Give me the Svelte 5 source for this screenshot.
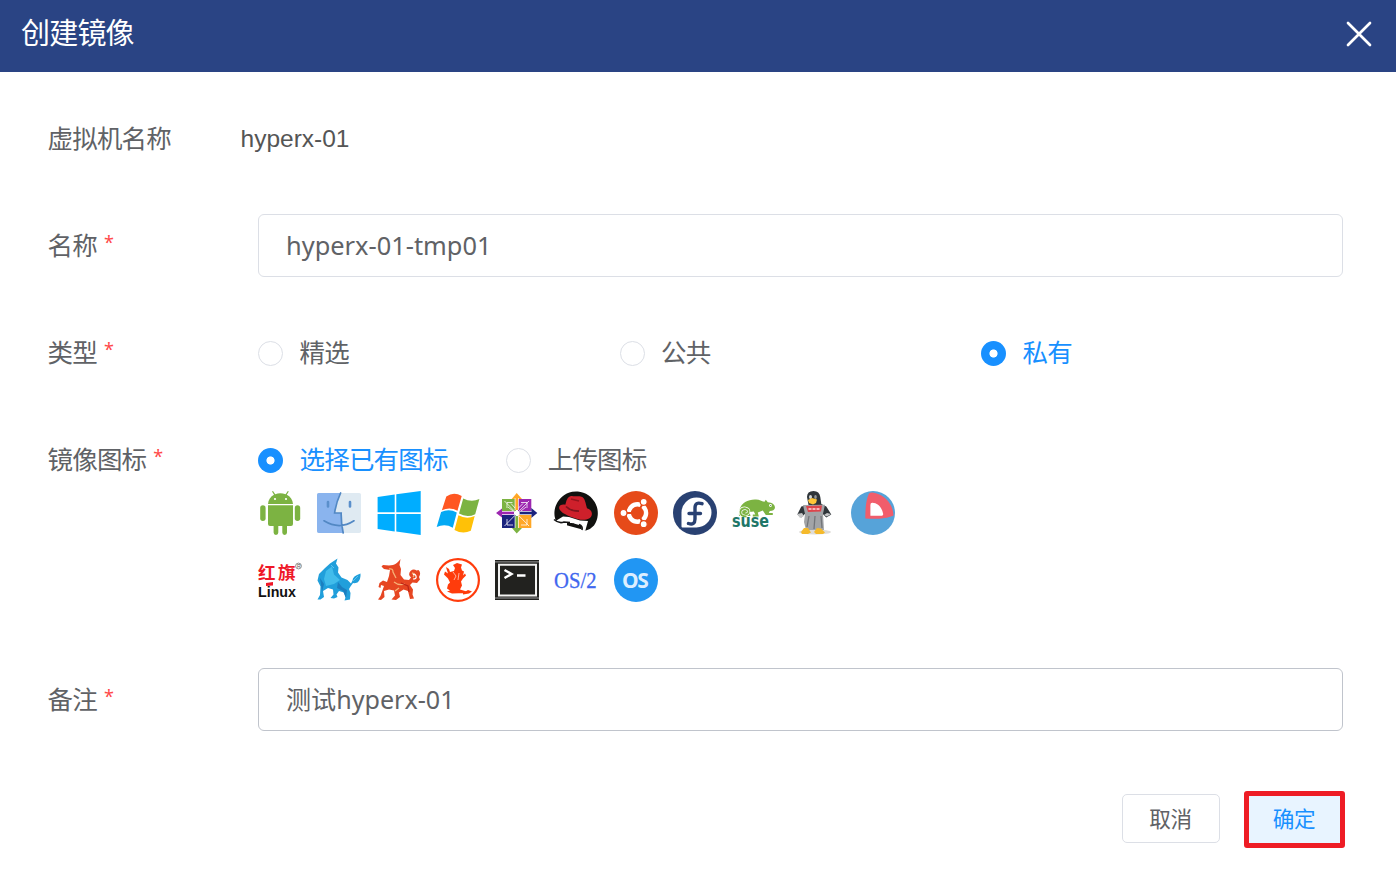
<script>
  let name = $state('hyperx-01-tmp01');
  let remark = $state('测试hyperx-01');
  let type = $state('私有');
  let source = $state('选择已有图标');
  const types = ['精选', '公共', '私有'];
  const sources = ['选择已有图标', '上传图标'];
</script>

{#snippet radio(label, active, pick)}
  <button class="radio" class:active onclick={pick}>
    <span class="dot"></span><span class="text">{label}</span>
  </button>
{/snippet}

<div class="dialog">
  <header>
    <h1>创建镜像</h1>
    <svg class="close" width="26" height="26" viewBox="0 0 26 26"><path d="M2 2 24 24M24 2 2 24" fill="none" stroke="#fff" stroke-width="2.7" stroke-linecap="round" /></svg>
  </header>

  <main>
    <div class="row vm">
      <div class="label">虚拟机名称</div>
      <div class="value">hyperx-01</div>
    </div>

    <div class="row name">
      <div class="label">名称<i>*</i></div>
      <input bind:value={name} />
    </div>

    <div class="row type">
      <div class="label">类型<i>*</i></div>
      <div class="types">
        {#each types as t}{@render radio(t, type === t, () => (type = t))}{/each}
      </div>
    </div>

    <div class="row icon-row">
      <div class="label">镜像图标<i>*</i></div>
      <div>
        <div class="sources">
          {#each sources as s}{@render radio(s, source === s, () => (source = s))}{/each}
        </div>
        <div class="icons">
          <!-- Android -->
          <svg viewBox="0 0 44 44">
            <g fill="#7cb342">
              <path d="M10 13C10.300 8.500 12.600 5.500 16 3.700L14 .6l1-.6 2.200 3.200q5-1.700 10.400 0L29.800 0l1 .6-2 3.100C32.400 5.500 34.700 8.500 35 13z" />
              <path d="M10 14.300h25V33a2 2 0 0 1-2 2h-4v6.600a2.300 2.300 0 0 1-4.700 0V35h-4v6.600a2.300 2.300 0 0 1-4.700 0V35H12a2 2 0 0 1-2-2z" />
              <rect x="2.200" y="14.300" width="5.400" height="15.600" rx="2.700" /><rect x="36.800" y="14.300" width="5.400" height="15.600" rx="2.700" />
            </g>
            <circle cx="17" cy="8" r="1.100" fill="#fff" /><circle cx="28" cy="8" r="1.100" fill="#fff" />
          </svg>
          <!-- Finder -->
          <svg viewBox="0 0 44 44">
            <rect x="0" y="2" width="44" height="40" rx="1.800" fill="#dfeaf2" />
            <path d="M1.800 2H23.600Q19 12 17.600 22h6.600q-.2 10 2 20H1.800A1.800 1.800 0 0 1 0 40.200V3.800A1.800 1.800 0 0 1 1.800 2z" fill="#8ab4ee" />
            <path d="M23.600 2Q19 12 17.600 22h6.600q-.2 10 2 20M7 29.800q15.500 9.500 30 0" fill="none" stroke="#5288c4" stroke-width="1.700" stroke-linecap="round" />
            <path d="M11 11v4.500M33 11v4.500" stroke="#5a8fcb" stroke-width="2.600" stroke-linecap="round" />
          </svg>
          <!-- Windows 10 -->
          <svg viewBox="0 0 44 44"><path fill="#00adff" d="M.6 6 17.700 3.500v17.700H.6zM19.300 3.200 43.700 0v21.200H19.300zM.6 22.900h17.100v17.600L.6 38.100zM19.300 22.900h24.400V44l-24.400-3.500z" /></svg>
          <!-- Windows 7 -->
          <svg viewBox="0 0 44 44">
            <path fill="#ff5722" d="M10.300 5.500Q17.500 .2 25.700 4.900L21.500 19.700Q14 15.500 5.900 19.200z" />
            <path fill="#7cb342" d="M27.200 7.400q8 4.200 16.200.6L39.200 23.200q-8 4-16.200-.6z" />
            <path fill="#03a9f4" d="M5.100 21q8-3.800 15.700.5L16.800 36.700q-8-4.400-16.100-.6z" />
            <path fill="#ffc107" d="M22.400 24.200q8 4.500 16.300.8L34.800 39.800q-8 4-16.300-.8z" />
          </svg>
          <!-- CentOS -->
          <svg viewBox="0 0 44 44">
            <path fill="#7cb342" d="M7 8h14v13H7zM19.500 37H17l4.700 5.500L27 37z" />
            <path fill="#9c27b0" d="M23 8h13.300v13H23zM7 17.500v9L1 22z" />
            <path fill="#1a237e" d="M7 23.500h14V37H7zM36.300 17l6 5-6 5z" />
            <path fill="#ffa726" d="M23 23.500h13.300V37H23zM16.700 8 21.700 2 27 8z" />
            <path d="m9.500 10 24.500 25M34 10 9.500 35M12 17v-5.500h5.500M26 11.500h6V17M12 28v6h6M26 34h6v-6M16 12.500l4.500 5M28 12.500l-5 5M13 16l5 4M31 16l-5 4" stroke="#fff" stroke-width=".9" fill="none" opacity=".85" />
            <path d="M21.700 7v12" stroke="#fff" stroke-width="4" /><path d="M21.700 7v12" stroke="#ffa726" stroke-width="2.600" />
            <path d="M21.700 25v12" stroke="#fff" stroke-width="4" /><path d="M21.700 25v12" stroke="#7cb342" stroke-width="2.600" />
            <path d="M7 22h12M24.500 22h12" stroke="#fff" stroke-width="4" /><path d="M6 22h13" stroke="#9c27b0" stroke-width="2.600" /><path d="M24.500 22H37" stroke="#1a237e" stroke-width="2.600" />
            <circle cx="21.700" cy="22" r="2.600" fill="#fff" />
          </svg>
          <!-- Red Hat -->
          <svg viewBox="0 0 44 44">
            <path fill="#11110f" d="M2.500 31.500A21.700 21.700 0 1 1 40 34.500Q37 38 32 39.500z" />
            <path fill="#fff" d="M0 31 9 25.500 15 26 26 29.500 34 30 31.500 39 28 39.500 27 34.500 18 32 13 32 13 36 20 40 2 36z" />
            <path d="M0 28.500q5 4.500 10 2.500l6 .5M19 33l3 2M25 33.500q4 1.500 3 5.500" fill="none" stroke="#151515" stroke-width="1.600" />
            <path fill="#ce202b" d="M12.500 9.500C14.500 5.500 16 4.700 19 5.200c3 .5 5-.6 8.500.5 3.500 1 3.800 5.500 5.500 11.500 2.800 1 5.200 3 4.900 6C37.500 28.500 30 30 23.500 28 15 25.600 5.200 21.500 5.100 16.700c0-2.700 3.300-3.800 6.200-3z" />
            <path d="M12 15.500q4.500 4.500 13 4.700" fill="none" stroke="#7d141c" stroke-width="1.700" /><path d="m17 8 8 2" stroke="#94141d" stroke-width="1.300" />
          </svg>
          <!-- Ubuntu -->
          <svg viewBox="0 0 44 44">
            <circle cx="22" cy="22" r="22" fill="#e64a19" /><circle cx="23.400" cy="22" r="8.700" fill="none" stroke="#fff" stroke-width="4.400" />
            <path d="M23.400 22H9M23.400 22l7-12.300M23.400 22l7 12.300" stroke="#e64a19" stroke-width="2" />
            <g fill="#fff" stroke="#e64a19" stroke-width="1.200"><circle cx="9.500" cy="22" r="3.500" /><circle cx="29.700" cy="10.800" r="3.500" /><circle cx="29.700" cy="33.200" r="3.500" /></g>
          </svg>
          <!-- Fedora -->
          <svg viewBox="0 0 44 44">
            <circle cx="22" cy="22" r="22" fill="#294172" /><path fill="#fff" d="M8.500 35.500V21.500a15 15 0 1 1 15 15H9.500a1 1 0 0 1-1-1z" />
            <path d="M29 12.700q-7-2.300-7 4.300V28q0 6.500-6.500 4.500M16 22.500H27.500" fill="none" stroke="#294172" stroke-width="3.400" stroke-linecap="round" />
          </svg>
          <!-- SUSE -->
          <svg viewBox="0 0 44 44">
            <path fill="#7cb342" d="M7 25C6 13 15 8 24 8.500c4 0 6 2 8.500 2.200l1.300-2 2 2.500c5 .2 7.500 3 7.100 5.800q-.7 2.800-5.100 3l-1 2h4v2h-7l-3-4.500-5 2 1 4h-6v-2h2.500l-1.500-3-4.300.5 1 4z" />
            <path d="M14.500 25.500q-6.500 0-6-5 .7-3.500 5-3.200 3.700.7 3 4-1 2.500-3.400 1.500" fill="none" stroke="#fff" stroke-width="3.300" /><path d="M14.500 25.500q-6.500 0-6-5 .7-3.500 5-3.200 3.700.7 3 4-1 2.500-3.400 1.500" fill="none" stroke="#7cb342" stroke-width="1.800" />
            <circle cx="38.500" cy="14.500" r="1.400" fill="#fff" /><circle cx="38.700" cy="14.500" r=".6" fill="#397033" />
            <text x="0" y="36" textLength="37" lengthAdjust="spacingAndGlyphs" class="suse">suse</text>
          </svg>
          <!-- Penguin -->
          <svg viewBox="0 0 44 44">
            <ellipse cx="23" cy="41" rx="16" ry="2.500" fill="#dedcd8" />
            <path fill="#30363a" d="M16.500 14 15 6q0-6 6.500-6 6 0 6.800 6l1 7 5 2.500 5 8-5 3-4-4-13 1-4-1-4 4-4-3 4-8z" />
            <ellipse cx="18.500" cy="6" rx="1.500" ry="2" fill="#d5d8d8" /><ellipse cx="23.500" cy="6" rx="1.300" ry="2" fill="#989b9c" /><path fill="#ffc638" d="m16 9 4-2 5 1.500-1 3.500-3 1.500-4-1.500z" />
            <path fill="#a2a4a7" d="m11 14 22-.3-2 9 1 16.300H14l-2-8 1-8z" /><path d="m23 25-1 13M17 25l-2 11M29 25l1 12" stroke="#73767a" stroke-width="1.300" />
            <path fill="#c5c6c7" d="m5 23 5-1 2 3-4 2zM32 24l3-2 4 1-4 2.500z" /><path fill="#dd454c" d="m14 15 16-.5-1 6-13 .5z" /><path d="M16.500 18h11" stroke="#ffd9db" stroke-width="1.600" stroke-dasharray="3 1" />
            <path fill="#f5ba2b" d="m9 41 3-4 4 0 3 4.500-3 1.500h-6zM22 41l3-4 4 .500 4 4-2 1.500h-7z" />
          </svg>
          <!-- Deepin -->
          <svg viewBox="0 0 44 44"><circle cx="22" cy="22" r="22" fill="#56a3d9" /><path fill="#f15d6b" d="M14.300 27.500C14.300 17 15 9 18 2.500Q20 1 24 2C34 4.500 42 13 42.500 24.500c-7 3.500-19 3.700-28.200 3z" /><path fill="#fff" d="M19.400 24.800V14q0-2.300 2-2.200c5.300.2 9.600 4.500 10.800 11.200q.2 1.600-1.400 1.800z" /></svg>
          <!-- Red Flag Linux -->
          <svg viewBox="0 0 44 44"><text x="0 20" y="20.500" class="flag">红旗</text><path d="m8 25 7-1v3.500l-7 .5z" fill="#ef1727" /><circle cx="40.500" cy="8" r="2.900" fill="none" stroke="#777" stroke-width=".8" /><text x="38.900" y="10" class="reg">R</text><text x="0" y="38.500" textLength="38" lengthAdjust="spacingAndGlyphs" class="linux">Linux</text></svg>
          <!-- Kylin, blue -->
          <svg viewBox="0 0 44 44">
            <path fill="#219fdb" d="M20.500.5 19 5.500l2.500 4-.5 5 3.500 5 6 2.500 3.500 3.500 1.500-3Q35.500 18 43.500 15.500q.5 6-3 9-3 1-4.500.5l-2.500 3.500-1.500 2.500 1.500 4-.5 6.500-5.500 1 1-3-1.500-5-5-1.500-2.500 3.500 1 2.500-3.500 1.500-3.500-.5 3-3.500-.5-5-5-1.500L6 33l1 6-3.500 2.500H.500L3 37l.5-8.500L.5 22.500 2 16l5.500-5.500L13 5.500z" />
            <path fill="#41bceb" d="m9 13 6-4.500 2 8L23 22l-6 4-8 2-2-7z" /><path fill="#1b7fc0" d="m3 20 4 6-2 8-1-7zM21 24l4 5 5 3-1 8-3-7-6-3z" /><path d="m36 23 5-5M14 7l3 3" stroke="#5cc4ee" stroke-width="1" />
          </svg>
          <!-- Kylin, red -->
          <svg viewBox="0 0 44 44">
            <path fill="#e64622" d="M4.500 8.500 6 7l6 .5 4-.5q4-1 7.500-6l-1 6 1.500 4-.5 6 3.500 4.500 5 .5 2-2.500q-3.500-3-.5-6.500 3-2.500 6-.5l2-.5q3 3 .5 7l1 2.500-3 3.500-4.500-.5-2.500 2.500 3 4.500-.5 5 1.500 4-4 .5-1-4-1-4-4.500-1.500-4.500 3 1 4.500-4 3-4.500-.5 3.500-4-1-5-5-1-5 1.500.5 6-3.500 3-3-.5 2.500-3.500L7 28l-3-1-.5 3-2-1 1-4L6 22.500l4 1.500 2-6L13 12l-6-1z" />
            <path d="M12 11q4-1 4 3l3 6M35 15q4 1 1 4M17 24q5 4 11 2M18 33l4-3" fill="none" stroke="#f7b176" stroke-width="1.300" /><path d="M24 25l7 3 1 6" fill="none" stroke="#bd2517" stroke-width="1.300" /><path d="M36 17q2-2 3 1t-3 3" fill="none" stroke="#fff" stroke-width="1.200" />
          </svg>
          <!-- Round red emblem -->
          <svg viewBox="0 0 44 44"><circle cx="22" cy="22" r="20.900" fill="#fff" stroke="#ff3c0c" stroke-width="2.200" /><path fill="#ff3c0c" d="m10 9 3 2 1 3 4-1 1-3-2-3 4-2 5 1.500-1 3 1 3 2 1-1 4 2-2 1 2-3 3-2 3 1 4-2 4 5 1.500 3 .5-3 1.500-13 .5-5-2 3-1-3-2 1-4 2-2-2-4-4-4 1-3 3 2-1-3zM27 35l5-3 4 1.500-3 2-6 1z" /><path d="m17 14 3 4-2 4M23 15l-1 7" stroke="#fff" stroke-width=".6" fill="none" /></svg>
          <!-- Terminal -->
          <svg viewBox="0 0 44 44"><path fill="#22221f" d="M0 2h44v40H0z" /><path fill="none" stroke="#f3f3f2" stroke-width="2" d="M4 6.800h37v30.700H4z" /><path d="M0 3.900h44M0 40h44" stroke="#aaa" stroke-width=".9" /><path d="m9.500 12 7 4-7 4M22 17.500h8.500" fill="none" stroke="#fff" stroke-width="2.400" /></svg>
          <!-- OS/2 -->
          <svg viewBox="0 0 44 44"><text y="29.500" textLength="42.500" lengthAdjust="spacingAndGlyphs" class="os2">OS/2</text></svg>
          <!-- Generic OS -->
          <svg viewBox="0 0 44 44"><circle cx="22" cy="22" r="22" fill="#2196f3" /><text x="8 23.300" y="29.800" class="os">OS</text></svg>
        </div>
      </div>
    </div>

    <div class="row remark">
      <div class="label">备注<i>*</i></div>
      <input bind:value={remark} />
    </div>
  </main>

  <footer>
    <button class="cancel">取消</button>
    <button class="confirm">确定</button>
  </footer>
</div>

<style>
  :global(body) { margin: 0; background: #fff; }
  .dialog { width: 1396px; height: 872px; box-sizing: border-box; overflow: hidden; background: #fff; color: #606266; font: 25.500px/34px "Noto Sans", "Noto Sans CJK SC", sans-serif; }
  header { height: 72px; box-sizing: border-box; padding: 0 24px 0 21px; display: flex; justify-content: space-between; background: #2a4484; }
  h1 { margin: 13px 0 0; color: #fff; font-size: 29px; line-height: 40px; font-weight: 400; letter-spacing: -.8px; }
  .close { margin-top: 21px; }
  main { padding: 50px 53px 0 47.500px; }
  .row { display: flex; align-items: center; }
  .row > :last-child { flex: 1; min-width: 0; }
  .label { width: 210.500px; flex: none; margin-top: -2px; white-space: nowrap; letter-spacing: -.8px; }
  .label i { display: inline-block; height: 34px; margin-left: 7px; color: #ff4949; font-style: normal; font-size: 18px; line-height: 28px; vertical-align: top; letter-spacing: 0; }
  .vm .label { width: 193px; }
  .value { color: #555; font-family: "Liberation Sans", sans-serif; font-size: 24.500px; }
  .name { margin-top: 58px; }
  .type { margin-top: 59px; }
  .icon-row { margin-top: 73px; align-items: flex-start; }
  .icon-row .label { margin-top: -1px; }
  .remark { margin-top: 66px; }
  input { height: 63px; box-sizing: border-box; padding: 0 27px 2px; border: 1px solid #dcdfe6; border-radius: 6px; outline: 0; color: #606266; background: #fff; font: 25.400px "Noto Sans", "Noto Sans CJK SC", sans-serif; }
  .remark input { padding-bottom: 3px; border-color: #c0c4cc; font-size: 25.100px; }
  button { font-family: inherit; cursor: pointer; }
  .radio { display: flex; align-items: center; gap: 16.500px; height: 34px; padding: 0; border: 0; background: none; color: #606266; font-size: 25.500px; line-height: 34px; letter-spacing: -.8px; white-space: nowrap; }
  .text { margin-top: -2px; }
  .dot { width: 25px; height: 25px; box-sizing: border-box; border: 1px solid #dcdfe6; border-radius: 50%; }
  .active { color: #1890ff; }
  .active .dot { border: 0; background: radial-gradient(circle, #fff 3.600px, #1890ff 4.500px); }
  .types { display: grid; grid-template-columns: repeat(3, 361.500px); }
  .sources { display: flex; gap: 58.500px; }
  .icons { display: grid; grid-template-columns: repeat(11, 44px); gap: 23px 15.300px; margin-top: 14px; }
  .icons svg { width: 44px; height: 44px; display: block; overflow: visible; }
  .suse { font: 700 17px "DejaVu Sans", sans-serif; fill: #1f7768; }
  .flag { font: 700 17.500px "Noto Sans CJK SC", sans-serif; fill: #ef1727; }
  .reg { font: 5px "Liberation Sans", sans-serif; fill: #555; }
  .linux { font: 700 15.500px "Liberation Sans", sans-serif; fill: #111; }
  .os2 { font: 24px "Liberation Serif", serif; fill: #4168ef; stroke: #4168ef; stroke-width: .3; }
  .os { font: 700 21px "Noto Sans", sans-serif; fill: #dceeff; }
  footer { margin-top: 60px; padding-right: 51px; display: flex; justify-content: flex-end; align-items: flex-start; gap: 24px; }
  footer button { box-sizing: border-box; padding: 0 1px 2px 0; font-size: 21.600px; line-height: 30px; letter-spacing: -.4px; }
  .cancel { width: 98px; height: 49px; margin-top: 3px; border: 1px solid #dcdfe6; border-radius: 5px; color: #606266; background: #fff; }
  .footer .cancel, .cancel { padding-bottom: 0; }
  .confirm { width: 101px; height: 57px; border: 5px solid #ee1c25; border-radius: 3px; color: #1890ff; background: #e8f4ff; }
</style>
